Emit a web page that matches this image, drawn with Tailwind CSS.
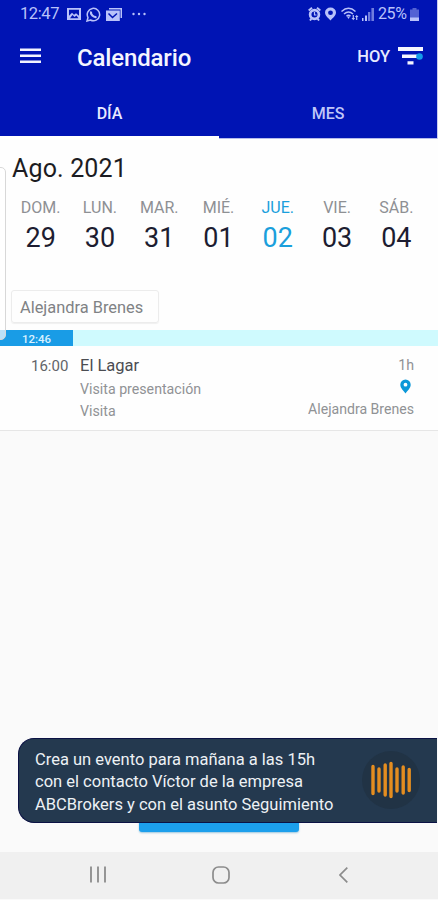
<!DOCTYPE html>
<html lang="es">
<head>
<meta charset="utf-8">
<title>Calendario</title>
<script src="https://cdn.jsdelivr.net/npm/@tailwindcss/browser@4"></script>
</head>
<body class="w-[438px] h-[900px] overflow-hidden bg-white font-[Roboto,sans-serif]">
<div class="relative flex flex-col w-[438px] h-[900px] bg-[#fafafa]">
  <header class="h-[139px] shrink-0 flex flex-col bg-[#0014b4] border-r border-[#c9cdf0] text-[#e8eaff]">
    <div class="h-7 shrink-0 flex items-center pl-5 pr-[18px] text-[#b9c2fa]">
      <span class="text-[16.5px] leading-7 w-[47px] whitespace-nowrap tracking-[-0.4px]">12:47</span>
      <svg class="w-[14px] h-3" viewBox="0 0 14 12"><path fill="currentColor" fill-rule="evenodd" d="M0 0h14v12H0zM2 1.800v6l3-3 2 2 2-1.500 3 2.500v-6zM3 10.200h8.500L9.500 7.500 7.500 9 5.500 7z"/></svg>
      <svg class="w-[15px] h-[15px] ml-[5px]" viewBox="0 0 15 15" fill="none" stroke="currentColor" stroke-width="1.500"><path d="M1 14l1-3.500A6.200 6.200 0 1 1 4.500 13z"/><path d="M5 4.500c-.8 3 2.500 6 5.500 5.500" stroke-width="2.200"/></svg>
      <svg class="w-4 h-[13px] ml-[5px]" viewBox="0 0 16 13"><path fill="currentColor" d="M3 0h13v10h-1.500V1.500H3zM0 2.500h13.800V13H0z"/><path d="M2.500 5.500l4 4 4.500-4" fill="none" stroke="#0014b4" stroke-width="1.500"/></svg>
      <svg class="w-[15px] h-3 ml-[10px]" viewBox="0 0 15 12" fill="currentColor"><circle cx="1.500" cy="6" r="1.200"/><circle cx="7" cy="6" r="1.200"/><circle cx="12.500" cy="6" r="1.200"/></svg>
      <div class="ml-auto flex items-center">
        <svg class="w-[13px] h-[14px]" viewBox="0 0 13 14" fill="none" stroke="currentColor"><circle cx="6.500" cy="7.500" r="4.400" stroke-width="2.700"/><path d="M.7 3.500L4 .8M9 .8l3.300 2.700M2 13.500l1.500-2M11 13.500l-1.500-2" stroke-width="2"/><path d="M6.500 5v3h2" stroke-width="1.200"/></svg>
        <svg class="w-[11px] h-[14px] ml-[4px]" viewBox="0 0 10 14" preserveAspectRatio="none"><path fill="currentColor" fill-rule="evenodd" d="M5 .5a5 5 0 0 1 5 5C10 8.500 7 11 5 13.500 3 11 0 8.500 0 5.500a5 5 0 0 1 5-5zm0 3a2.200 2.200 0 1 0 0 4.400 2.200 2.200 0 0 0 0-4.400z"/></svg>
        <svg class="w-[18px] h-[14px] ml-[5px]" viewBox="0 0 18 14" fill="none" stroke="currentColor" stroke-width="1.500"><path d="M.5 4.500Q7.500-2 14.500 4.500M3 7q4.500-4 9 0M5.500 9.200q2-1.800 4 0"/><path d="M6 9.500h3L7.500 12z" fill="currentColor" stroke="none"/><path d="M12.300 8v3.500M15.700 9.500V13" stroke-width="1.200"/><path fill="currentColor" stroke="none" d="M10.500 11h3.600L12.300 13.200zM13.900 10h3.600L15.700 8z"/></svg>
        <svg class="w-[12px] h-[13px] ml-[3px]" viewBox="0 0 12 13" fill="currentColor"><path d="M0 10h1.500v3H0zM3 7.500h2V13H3z"/><path opacity=".6" d="M6 4h2.300v9H6zM9.400 0H12v13H9.400z"/></svg>
        <span class="text-[16px] leading-7 ml-[4px] w-[32px] whitespace-nowrap tracking-[-0.4px]">25%</span>
        <svg class="w-[9px] h-[13px]" viewBox="0 0 9 13" fill="currentColor"><path opacity=".45" d="M2.500 0h4v1.500H9V10H0V1.500h2.500z"/><path d="M0 9.500h9V13H0z"/></svg>
      </div>
    </div>
    <div class="h-[60px] shrink-0 flex items-center pl-5 pr-[13px]">
      <svg class="w-[21px] h-4 -mt-[5px]" viewBox="0 0 21 16" fill="#f2f3ff"><path d="M0 .5h21V3H0zM0 6.500h21V9H0zM0 12.500h21V15H0z"/></svg>
      <h1 class="ml-9 text-[24px] leading-7 font-medium tracking-[-0.15px] text-[#f5f6ff]">Calendario</h1>
      <span class="ml-auto -mt-[2px] text-[16.500px] font-medium">HOY</span>
      <svg class="ml-[8px] -mt-[5px] w-[26px] h-[18px]" viewBox="0 0 26 18" fill="#f5f6ff"><path d="M0 0h25v4H0zM4 7.500h15v3.500H4zM9.500 14.200h6v3.300h-6z"/><circle cx="21.500" cy="9.500" r="3.300" fill="#149bea"/></svg>
    </div>
    <div class="h-[51px] shrink-0 grid grid-cols-[219px_1fr] text-center text-[16px] font-medium leading-[51px]">
      <div class="border-b-[3px] border-white h-[51px]">DÍA</div>
      <div class="h-[51px] text-[#bfc6f8] border-b border-[#b5bbec]">MES</div>
    </div>
  </header>

  <main class="relative h-[291px] shrink-0 bg-[#fefefe]">
    <h2 class="pt-[14px] pl-3 text-[25px] leading-8 tracking-[0.15px] text-[#1c1c22]">Ago. 2021</h2>
    <div class="grid grid-cols-7 pl-[11px] pr-3 pt-[10px] text-center text-[16px] leading-[26px] text-[#8e9094]">
      <div>DOM.<div class="text-[27px] leading-[34px] text-[#1d1d31]">29</div></div>
      <div>LUN.<div class="text-[27px] leading-[34px] text-[#1d1d31]">30</div></div>
      <div>MAR.<div class="text-[27px] leading-[34px] text-[#1d1d31]">31</div></div>
      <div>MIÉ.<div class="text-[27px] leading-[34px] text-[#1d1d31]">01</div></div>
      <div class="text-[#1a9fdc]">JUE.<div class="text-[27px] leading-[34px]">02</div></div>
      <div>VIE.<div class="text-[27px] leading-[34px] text-[#1d1d31]">03</div></div>
      <div>SÁB.<div class="text-[27px] leading-[34px] text-[#1d1d31]">04</div></div>
    </div>
    <div class="ml-[11px] mt-[35px] w-[148px] h-[33px] rounded-[3px] border border-[#ececec] shadow-[0_1px_1px_#f0f0f0] pl-2 text-[16.400px] leading-[33px] text-[#808285] whitespace-nowrap">Alejandra Brenes</div>
    <div class="mt-[7px] h-4 bg-[#cffafe]">
      <div class="w-[73px] h-4 bg-[#199ce6] text-center text-[11.500px] font-medium leading-[18px] text-[#d9f1ff]">12:46</div>
    </div>
    <div class="flex h-[85px] pt-[8px] pr-6 border-b border-[#e6e6e6] leading-[23px] text-[14.200px] text-[#909295] whitespace-nowrap">
      <span class="w-20 pl-[31px] pt-px text-[15px] text-[#626468]">16:00</span>
      <div class="flex flex-col">
        <span class="text-[16.500px] text-[#4b4d52]">El Lagar</span>
        <span class="pt-px">Visita presentación</span>
        <span class="-mt-px">Visita</span>
      </div>
      <div class="ml-auto flex flex-col items-end">
        <span class="leading-[22px]">1h</span>
        <svg class="w-[11px] h-[15px] mr-[3px] mt-[3px] mb-[4px]" viewBox="0 0 11 15"><path fill="#0c98d8" fill-rule="evenodd" d="M5.500.500a5.200 5.200 0 0 1 5.200 5.200c0 3.500-3.500 6-5.200 8.800C3.800 11.700.3 9.200.3 5.700A5.200 5.200 0 0 1 5.500.500zm0 3.300a1.900 1.900 0 1 0 0 3.800 1.900 1.900 0 0 0 0-3.800z"/></svg>
        <span class="leading-[23px] text-[14.100px]">Alejandra Brenes</span>
      </div>
    </div>
    <div class="absolute -left-2 top-[28px] w-[14px] h-[173px] rounded-r-[5px] border border-[#d8d8d8] bg-white/70"></div>
  </main>

  <div class="grow relative">
    <div class="absolute left-[139px] top-[380px] w-[160px] h-[22px] rounded-[3px] bg-[#1c9fec] shadow-[0_1px_2px_#9bc6dd]"></div>
    <div class="absolute left-[18px] top-[308px] w-[419px] h-[85px] rounded-l-[16px] border border-r-0 border-[#0b1244] bg-[#24394f] pl-4 pt-[10px] pr-[17px] flex justify-between text-[16.500px] leading-[22.400px] text-[#edf1f5]">
      <p class="whitespace-nowrap">Crea un evento para mañana a las 15h<br>con el contacto Víctor de la empresa<br>ABCBrokers y con el asunto Seguimiento</p>
      <svg class="w-[58px] h-[58px] mt-[2px] shrink-0" viewBox="0 0 58 58"><circle cx="29" cy="29" r="29" fill="#213345"/><g stroke="#e48d20" stroke-width="3.400" stroke-linecap="round"><path d="M11 15.500v27M17 18v22M23.200 14v30M29 12.500v33M35 18v22M41.200 16v26M47.200 18.500v21"/></g></svg>
    </div>
  </div>

  <nav class="h-12 shrink-0 bg-[#f0f0f0] border-b border-[#fafafa] grid grid-cols-[196px_49px_193px] items-center justify-items-center text-[#8c8c8c]">
    <svg class="w-[18px] h-[17px] mt-[-2px]" viewBox="0 0 18 17" fill="none" stroke="currentColor" stroke-width="1.800"><path d="M2 .5v16M9 .5v16M16 .5v16"/></svg>
    <svg class="w-[18px] h-[18px] mt-[-2px]" viewBox="0 0 18 18" fill="none" stroke="currentColor" stroke-width="1.700"><rect x="1" y="1" width="16" height="16" rx="5.500"/></svg>
    <svg class="w-[9px] h-4 mt-[-2px] ml-[3px]" viewBox="0 0 9 16" fill="none" stroke="currentColor" stroke-width="1.700"><path d="M8.300.7L1 8l7.300 7.300"/></svg>
  </nav>
</div>
</body>
</html>
